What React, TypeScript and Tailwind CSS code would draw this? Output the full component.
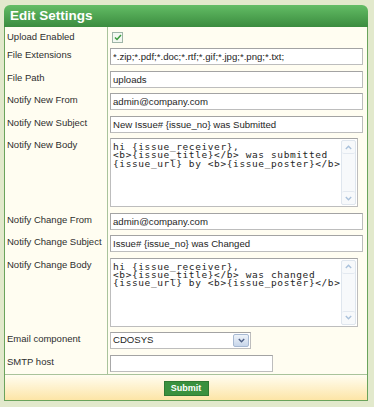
import type { ReactNode } from "react";

const Chevron = ({ up, color }: { up?: boolean; color: string }) => (
  <svg width="7" height="5" viewBox="0 0 7 5" className="block">
    <path
      d={up ? "M0.8 4 L3.5 1.3 L6.2 4" : "M0.8 1 L3.5 3.7 L6.2 1"}
      fill="none"
      stroke={color}
      strokeWidth="1.4"
    />
  </svg>
);

const Row = ({ label, children }: { label: string; children: ReactNode }) => (
  <div className="flex">
    <div className="w-[103px] shrink-0 border-r border-[#a9c39b] pl-[2px] pt-[3px] text-[9.5px] leading-[13px] text-[#2e2e2e]">
      {label}
    </div>
    <div className="flex-1 pl-[2px] pt-[3px] pb-[2.5px]">{children}</div>
  </div>
);

const TextBox = ({ value, width = "w-[253px]" }: { value?: string; width?: string }) => (
  <input
    defaultValue={value}
    className={`${width} block h-[17px] border border-[#bdbdbd] border-t-[#a3a3a3] border-l-[#a8a8a8] bg-white px-[2px] text-[9.6px] text-[#1e1e1e] outline-none`}
  />
);

const BodyBox = ({ value }: { value: string }) => (
  <div className="flex h-[69px] w-[248px] border border-[#bdbdbd] border-t-[#a3a3a3] bg-white">
    <textarea
      defaultValue={value}
      className="flex-1 resize-none overflow-hidden pl-[2px] pt-[4px] font-['DejaVu_Sans_Mono',monospace] text-[9.5px] leading-[8.4px] tracking-[0.6px] text-[#1e1e1e] outline-none"
    />
    <div className="my-[1px] mr-[1px] flex w-[15px] flex-col justify-between rounded-[2px] border border-[#dfe6ee] bg-[#f7f9fb]">
      <div className="flex h-[13px] items-center justify-center rounded-[2px] border-b border-[#e3e9f0]">
        <Chevron up color="#a9c1db" />
      </div>
      <div className="flex h-[13px] items-center justify-center rounded-[2px] border-t border-[#e3e9f0]">
        <Chevron color="#a9c1db" />
      </div>
    </div>
  </div>
);

const newBody = "hi {issue_receiver},\n<b>{issue_title}</b> was submitted\n{issue_url} by <b>{issue_poster}</b>";
const changeBody = "hi {issue_receiver},\n<b>{issue_title}</b> was changed\n{issue_url} by <b>{issue_poster}</b>";

export default function App() {
  return (
    <div className="min-h-[407px] bg-[#e2e9cc] pl-[4px] pt-[5px] font-['Liberation_Sans',Arial,sans-serif]">
      <div className="w-[364px]">
        <div className="h-[22px] rounded-t-[6px] bg-gradient-to-b from-[#63bd65] to-[#3b8c3f] pl-[6px] text-[13.5px] font-bold leading-[22px] text-white">
          Edit Settings
        </div>
        <div className="border-x border-b border-[#6aa35c] bg-[#fffdf1]">
          <div className="flex">
            <div className="w-[103px] shrink-0 border-r border-[#a9c39b] pl-[2px] pt-[3px] pb-[2px] text-[9.5px] leading-[13px] text-[#2e2e2e]">
              Upload Enabled
            </div>
            <div className="flex-1 pl-[4px] pt-[5px]">
              <span className="flex h-[11px] w-[11px] items-center justify-center border border-[#9fb5a7] bg-[#f3f8f1]">
                <svg width="8" height="7" viewBox="0 0 8 7">
                  <path d="M1 3.5 L3 5.5 L7 1" fill="none" stroke="#3a9c3c" strokeWidth="1.5" />
                </svg>
              </span>
            </div>
          </div>
          <Row label="File Extensions">
            <TextBox value="*.zip;*.pdf;*.doc;*.rtf;*.gif;*.jpg;*.png;*.txt;" />
          </Row>
          <Row label="File Path">
            <TextBox value="uploads" />
          </Row>
          <Row label="Notify New From">
            <TextBox value="admin@company.com" />
          </Row>
          <Row label="Notify New Subject">
            <TextBox value="New Issue# {issue_no} was Submitted" />
          </Row>
          <Row label="Notify New Body">
            <BodyBox value={newBody} />
          </Row>
          <Row label="Notify Change From">
            <TextBox value="admin@company.com" />
          </Row>
          <Row label="Notify Change Subject">
            <TextBox value="Issue# {issue_no} was Changed" />
          </Row>
          <Row label="Notify Change Body">
            <BodyBox value={changeBody} />
          </Row>
          <Row label="Email component">
            <div className="flex h-[17px] w-[141px] items-center border border-[#bdbdbd] border-t-[#a3a3a3] bg-white">
              <span className="flex-1 pl-[2px] text-[9.6px] text-[#1e1e1e]">CDOSYS</span>
              <span className="mr-[1px] flex h-[13px] w-[16px] items-center justify-center rounded-[2px] border border-[#a7b9d2] bg-gradient-to-b from-[#eef3fa] to-[#c7d6ea]">
                <Chevron color="#4c5f86" />
              </span>
            </div>
          </Row>
          <Row label="SMTP host">
            <TextBox width="w-[163px]" />
          </Row>
          <div className="flex h-[26px] justify-center border-t border-[#a9c39b] bg-gradient-to-b from-[#fffdf1] to-[#fde5a6] pt-[6px]">
            <button className="h-[15px] w-[45px] border border-[#2f7a33] bg-[#3a913e] text-[9px] font-bold leading-[13px] text-white">
              Submit
            </button>
          </div>
        </div>
      </div>
    </div>
  );
}
